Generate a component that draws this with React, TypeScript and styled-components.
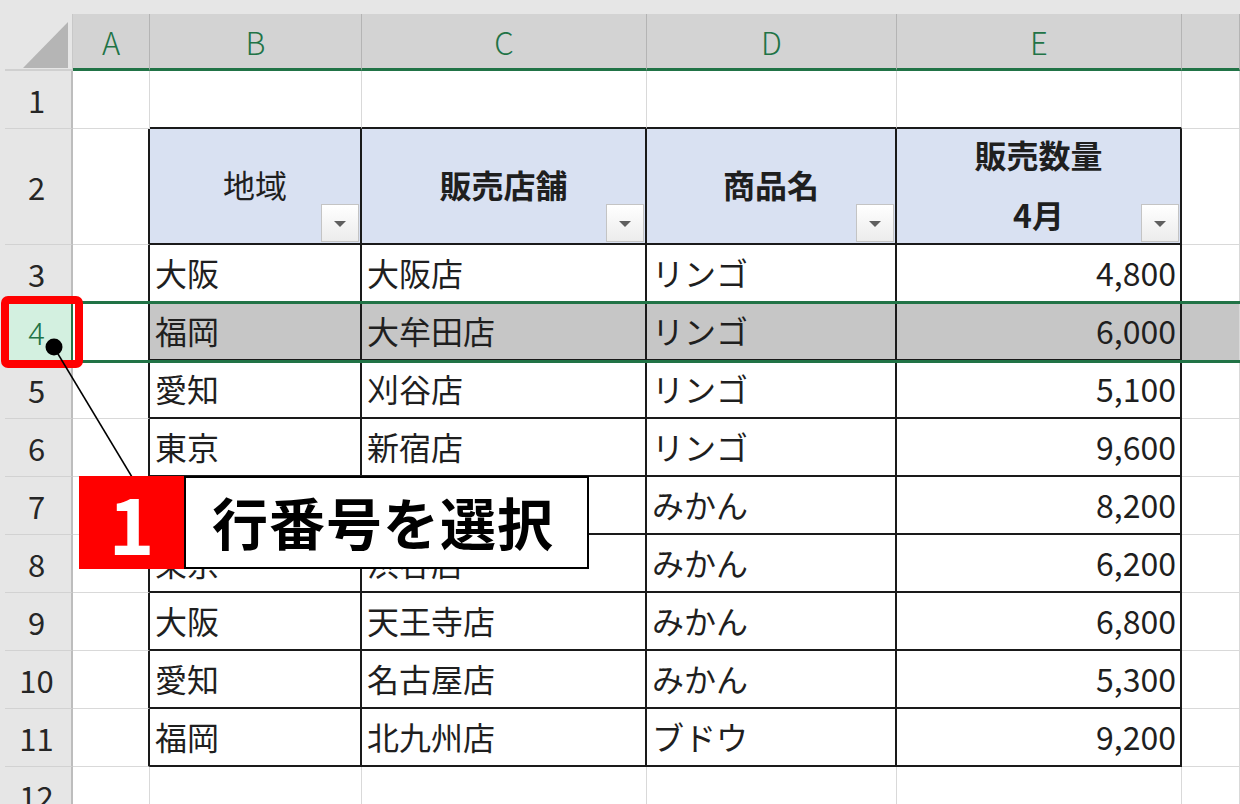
import React from 'react';
import styled, { createGlobalStyle, css } from 'styled-components';

const GlobalStyle = createGlobalStyle`
  html, body {
    margin: 0;
    padding: 0;
    overflow: hidden;
    background: #ffffff;
  }
  body {
    font-family: "Noto Sans CJK JP", "Noto Sans", sans-serif;
  }
`;

const COLS = [
  { key: 'A', width: 77 },
  { key: 'B', width: 212 },
  { key: 'C', width: 285 },
  { key: 'D', width: 250 },
  { key: 'E', width: 285 },
];

type RowData = { area: string; shop: string; item: string; qty: string };

const ROWS: RowData[] = [
  { area: '大阪', shop: '大阪店', item: 'リンゴ', qty: '4,800' },
  { area: '福岡', shop: '大牟田店', item: 'リンゴ', qty: '6,000' },
  { area: '愛知', shop: '刈谷店', item: 'リンゴ', qty: '5,100' },
  { area: '東京', shop: '新宿店', item: 'リンゴ', qty: '9,600' },
  { area: '神奈川', shop: '横浜店', item: 'みかん', qty: '8,200' },
  { area: '東京', shop: '渋谷店', item: 'みかん', qty: '6,200' },
  { area: '大阪', shop: '天王寺店', item: 'みかん', qty: '6,800' },
  { area: '愛知', shop: '名古屋店', item: 'みかん', qty: '5,300' },
  { area: '福岡', shop: '北九州店', item: 'ブドウ', qty: '9,200' },
];

const SELECTED_ROW = 4;

function App() {
  return (
    <>
      <GlobalStyle />
      <Sheet>
        <HeaderRow>
          <Corner>
            <svg width="68" height="55" viewBox="0 0 68 55">
              <polygon points="63,8 63,54 18,54" fill="#b5b5b5" />
            </svg>
          </Corner>
          {COLS.map((c) => (
            <ColumnHeader key={c.key} $width={c.width}>{c.key}</ColumnHeader>
          ))}
          <ColumnHeader $fill />
        </HeaderRow>

        <Row $height={58}>
          <RowHeader>1</RowHeader>
          <Cell $width={77} />
          <Cell $width={212} $edgeBottom />
          <Cell $width={285} $edgeBottom />
          <Cell $width={250} $edgeBottom />
          <Cell $width={285} $edgeBottom />
          <Cell $fill />
        </Row>

        <Row $height={116}>
          <RowHeader>2</RowHeader>
          <Cell $width={77} $edgeRight />
          <HeadCell $width={212}>
            地域
            <FilterButton />
          </HeadCell>
          <HeadCell $width={285} $bold>
            販売店舗
            <FilterButton />
          </HeadCell>
          <HeadCell $width={250} $bold>
            商品名
            <FilterButton />
          </HeadCell>
          <HeadCell $width={285} $bold>
            <HeadLine>販売数量</HeadLine>
            <HeadLine>4月</HeadLine>
            <FilterButton />
          </HeadCell>
          <Cell $fill />
        </Row>

        {ROWS.map((r, i) => {
          const n = i + 3;
          const sel = n === SELECTED_ROW;
          return (
            <Row key={n} $height={58} $selected={sel}>
              <RowHeader $selected={sel}>{n}</RowHeader>
              <Cell $width={77} $edgeRight />
              <DataCell $width={212} $selected={sel}>{r.area}</DataCell>
              <DataCell $width={285} $selected={sel}>{r.shop}</DataCell>
              <DataCell $width={250} $selected={sel}>{r.item}</DataCell>
              <DataCell $width={285} $selected={sel} $right>{r.qty}</DataCell>
              <Cell $fill $selected={sel} />
            </Row>
          );
        })}

        <Row $height={58}>
          <RowHeader>12</RowHeader>
          <Cell $width={77} />
          <Cell $width={212} />
          <Cell $width={285} />
          <Cell $width={250} />
          <Cell $width={285} />
          <Cell $fill />
        </Row>

        <HighlightBox />
        <Leader width="1240" height="804" viewBox="0 0 1240 804">
          <line x1="55" y1="349" x2="132" y2="477" stroke="#000" strokeWidth="1.5" />
          <circle cx="54" cy="347" r="8.5" fill="#000" />
        </Leader>
        <Callout>
          <StepBadge>1</StepBadge>
          <StepLabel>行番号を選択</StepLabel>
        </Callout>
      </Sheet>
    </>
  );
}

const Sheet = styled.div`
  position: relative;
  width: 1240px;
  height: 804px;
  padding: 14px 0 0 5px;
  box-sizing: border-box;
  background: #e6e6e6;
  overflow: hidden;
`;

const HeaderRow = styled.div`
  display: flex;
  height: 57px;
`;

const Corner = styled.div`
  width: 68px;
  flex: none;
  box-sizing: border-box;
  border-bottom: 2px solid #d0d0d0;
  border-right: 1px solid #c8c8c8;
  svg {
    display: block;
  }
`;

const ColumnHeader = styled.div<{ $width?: number; $fill?: boolean }>`
  ${(p) => (p.$fill ? 'flex: 1;' : `width: ${p.$width}px; flex: none;`)}
  box-sizing: border-box;
  background: #d3d3d3;
  border-right: 1px solid #b4b4b4;
  border-bottom: 3px solid #217346;
  display: flex;
  align-items: center;
  justify-content: center;
  color: #217346;
  font-size: 31px;
  font-weight: 300;
  padding-top: 1px;
`;

const Row = styled.div<{ $height: number; $selected?: boolean }>`
  display: flex;
  position: relative;
  height: ${(p) => p.$height}px;
  ${(p) =>
    p.$selected &&
    css`
      z-index: 1;
      &::after {
        content: '';
        position: absolute;
        left: 68px;
        right: 0;
        top: -2px;
        bottom: -2px;
        border-top: 3px solid #217346;
        border-bottom: 3px solid #217346;
        pointer-events: none;
      }
    `}
`;

const RowHeader = styled.div<{ $selected?: boolean }>`
  width: 68px;
  flex: none;
  box-sizing: border-box;
  background: ${(p) => (p.$selected ? '#d3f0e0' : '#e6e6e6')};
  color: ${(p) => (p.$selected ? '#217346' : '#262626')};
  border-right: 2px solid ${(p) => (p.$selected ? '#217346' : '#bdbdbd')};
  border-bottom: 1px solid #d2d2d2;
  display: flex;
  align-items: center;
  justify-content: center;
  font-size: 31px;
  font-weight: ${(p) => (p.$selected ? 300 : 400)};
  padding-right: 3px;
`;

const Cell = styled.div<{
  $width?: number;
  $fill?: boolean;
  $edgeRight?: boolean;
  $edgeBottom?: boolean;
  $selected?: boolean;
}>`
  ${(p) => (p.$fill ? 'flex: 1;' : `width: ${p.$width}px; flex: none;`)}
  box-sizing: border-box;
  background: ${(p) => (p.$selected ? '#c6c6c6' : '#ffffff')};
  border-right: ${(p) => (p.$edgeRight ? '2px solid #1a1a1a' : '1px solid #d9d9d9')};
  border-bottom: ${(p) => (p.$edgeBottom ? '2px solid #1a1a1a' : '1px solid #d9d9d9')};
`;

const DataCell = styled.div<{ $width: number; $selected?: boolean; $right?: boolean }>`
  width: ${(p) => p.$width}px;
  flex: none;
  box-sizing: border-box;
  background: ${(p) => (p.$selected ? '#c6c6c6' : '#ffffff')};
  border-right: 2px solid #1a1a1a;
  border-bottom: 2px solid #1a1a1a;
  display: flex;
  align-items: center;
  justify-content: ${(p) => (p.$right ? 'flex-end' : 'flex-start')};
  padding: 0 4px 2px 5px;
  font-size: 32px;
  color: #1f1f1f;
  white-space: nowrap;
  overflow: hidden;
`;

const HeadCell = styled.div<{ $width: number; $bold?: boolean }>`
  position: relative;
  width: ${(p) => p.$width}px;
  flex: none;
  box-sizing: border-box;
  background: #d9e1f2;
  border-right: 2px solid #1a1a1a;
  border-bottom: 2px solid #1a1a1a;
  display: flex;
  flex-direction: column;
  align-items: center;
  justify-content: center;
  font-size: 32px;
  font-weight: ${(p) => (p.$bold ? 700 : 400)};
  color: #1f1f1f;
  padding-bottom: 4px;
`;

const HeadLine = styled.div`
  line-height: 60px;
`;

const FilterButton = styled.span`
  position: absolute;
  right: 1px;
  bottom: 1px;
  width: 38px;
  height: 38px;
  box-sizing: border-box;
  border: 1px solid #c4c4c4;
  background: linear-gradient(#ffffff, #ececec);
  &::after {
    content: '';
    position: absolute;
    left: 12px;
    top: 16px;
    border-left: 6px solid transparent;
    border-right: 6px solid transparent;
    border-top: 6px solid #5f5f5f;
  }
`;

const HighlightBox = styled.div`
  position: absolute;
  z-index: 2;
  left: 1px;
  top: 296px;
  width: 82px;
  height: 72px;
  box-sizing: border-box;
  border: 8px solid #ff0000;
  border-radius: 7px;
  pointer-events: none;
`;

const Leader = styled.svg`
  position: absolute;
  z-index: 2;
  left: 0;
  top: 0;
  pointer-events: none;
`;

const Callout = styled.div`
  position: absolute;
  z-index: 3;
  left: 79px;
  top: 476px;
  display: flex;
  height: 93px;
`;

const StepBadge = styled.div`
  width: 105px;
  background: #ff0000;
  color: #ffffff;
  font-size: 78px;
  font-weight: 700;
  display: flex;
  align-items: center;
  justify-content: center;
  padding-bottom: 4px;
  box-sizing: border-box;
`;

const StepLabel = styled.div`
  width: 405px;
  box-sizing: border-box;
  background: #ffffff;
  border: 2px solid #000000;
  display: flex;
  align-items: center;
  padding: 0 0 4px 26px;
  font-size: 56px;
  font-weight: 700;
  color: #000000;
  letter-spacing: 1px;
`;

export default App;
